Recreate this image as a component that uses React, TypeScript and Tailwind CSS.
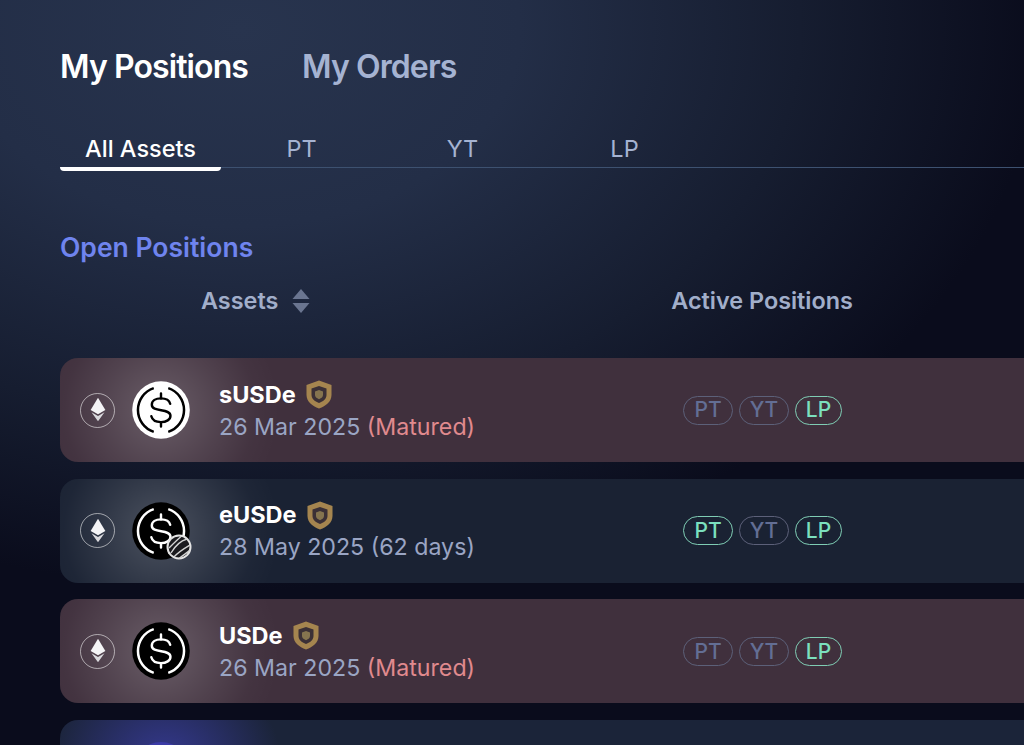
import type { ReactNode } from "react"

const font = { fontFamily: "Inter, sans-serif" }

const EthBadge = () => (
  <div className="flex h-[35px] w-[35px] shrink-0 items-center justify-center rounded-full border-[1.5px] border-white/55">
    <svg viewBox="0 0 20 30" className="h-[26px] w-[18px]">
      <path d="M10 1 L18.5 15 L10 20 L1.5 15 Z" fill="#f4f4f6" />
      <path d="M10 22 L17.5 17.5 L10 28 L2.5 17.5 Z" fill="#d9d9dd" />
    </svg>
  </div>
)

const Coin = ({ light, globe }: { light?: boolean; globe?: boolean }) => {
  const fg = light ? "#000" : "#fff"
  return (
    <div className="relative h-[58px] w-[58px] shrink-0">
      <svg viewBox="0 0 60 60" className="h-full w-full">
        <circle cx="30" cy="30" r="29.8" fill={light ? "#fff" : "#000"} />
        <g fill="none" stroke={fg} strokeWidth="2.6" strokeLinecap="butt">
          <path d="M22.5 7.4 A23.8 23.8 0 0 0 22.5 52.6" />
          <path d="M37.5 7.4 A23.8 23.8 0 0 1 37.5 52.6" />
        </g>
        <g fill="none" stroke={fg} strokeWidth="2.5" strokeLinecap="round">
          <path d="M39.5 23.5 C38.5 19.5 35 18 30 18 C24.5 18 20.5 20.5 20.5 24.5 C20.5 33 39.8 27.5 39.8 36 C39.8 40 35.5 42.5 30 42.5 C25 42.5 21 40.5 20 36.5" />
          <path d="M30 13 V18 M30 42.5 V47" />
        </g>
      </svg>
      {globe && (
        <svg viewBox="0 0 26 26" className="absolute right-[-2px] bottom-0 h-[26px] w-[26px]">
          <circle cx="13" cy="13" r="11.5" fill="#1b1b1f" stroke="#e4e4e4" strokeWidth="2" />
          <g fill="none" stroke="#d4d4d4" strokeWidth="1.4">
            <path d="M5 19 C9 12 14 7 21 5" />
            <path d="M3 14 C8 9 12 5 15 2.5" />
            <path d="M8 23 C12 18 19 14 24 11" />
            <path d="M13 24.5 C17 21 21 19 24 16" />
          </g>
        </svg>
      )}
    </div>
  )
}

const Shield = () => (
  <svg viewBox="0 0 26 29" className="h-[29px] w-[26px] shrink-0">
    <path d="M13 0.5 L25.5 5 V15 C25.5 21.5 20 26 13 28.5 C6 26 0.5 21.5 0.5 15 V5 Z" fill="#a5854f" />
    <path d="M13 6 L20.5 8.6 V15 C20.5 18.6 17.5 21.2 13 23 C8.5 21.2 5.5 18.6 5.5 15 V8.6 Z" fill="#3b3036" />
    <path d="M13 10 L17 11.4 V15 C17 16.8 15.5 18.2 13 19.2 C10.5 18.2 9 16.8 9 15 V11.4 Z" fill="#85744f" />
  </svg>
)

const Pill = ({ label, on }: { label: string; on?: boolean }) => (
  <span
    className={`flex h-[29px] items-center justify-center rounded-full border-[1.5px] text-[21px] font-medium ${
      label === "LP" ? "w-[47px]" : "w-[50px]"
    } ${on ? "border-[#7fcdb4] text-[#7be0bf]" : "border-[#5c6079] text-[#636e94]"}`}
  >
    {label}
  </span>
)

type RowProps = {
  tone: "red" | "blue"
  coin: ReactNode
  name: string
  date: string
  note: string
  matured?: boolean
  pt?: boolean
}

const Row = ({ tone, coin, name, date, note, matured, pt }: RowProps) => (
  <div
    className={`relative flex h-[104px] w-[1100px] shrink-0 items-center overflow-hidden rounded-[18px] ${
      tone === "red" ? "bg-[#40303d]" : "bg-[#1a2233]"
    }`}
  >
    <div className="absolute top-[-68px] left-[-20px] h-[240px] w-[240px] bg-[radial-gradient(closest-side,rgba(255,255,255,0.22),rgba(255,255,255,0.09)_50%,rgba(255,255,255,0.02)_80%,rgba(255,255,255,0))]" />
    <div className="relative flex items-center pl-[20px]">
      <EthBadge />
      <div className="ml-[17px]">{coin}</div>
      <div className="ml-[29px] w-[450px] pt-px">
        <div className="flex items-center gap-[10px]">
          <span className="text-[23.5px] leading-[30px] font-bold text-white">{name}</span>
          <Shield />
        </div>
        <div className="mt-[2px] text-[23.2px] leading-[30px] text-[#9aa5c4]">
          {date} <span className={matured ? "text-[#e08a8e]" : ""}>{note}</span>
        </div>
      </div>
      <div className="ml-[14px] flex gap-[6px]">
        <Pill label="PT" on={pt} />
        <Pill label="YT" />
        <Pill label="LP" on />
      </div>
    </div>
  </div>
)

const App = () => {
  return (
    <div
      style={font}
      className="h-[745px] w-[1024px] overflow-hidden bg-[#0a0c1c] bg-[radial-gradient(ellipse_800px_560px_at_240px_30px,#28344e_0%,#232e47_35%,#161d30_70%,#0a0c1c_100%)] pt-[43px] pl-[60px]"
    >
      <div className="flex gap-[54px] text-[32px] leading-[48px] font-semibold tracking-[-0.9px]">
        <span className="text-white">My Positions</span>
        <span className="text-[#a5b3d2]">My Orders</span>
      </div>

      <div className="mt-[29px] flex h-[48px] border-b border-[#3d5170] text-[23.5px]">
        <div className="-mb-[3px] flex h-[51px] w-[161px] items-center justify-center rounded-b-sm border-b-[4px] border-white pt-[11px] font-medium text-white">
          All Assets
        </div>
        <div className="flex w-[161px] items-center justify-center pt-[10px] text-[#a5b3d2]">PT</div>
        <div className="flex w-[161px] items-center justify-center pt-[10px] text-[#a5b3d2]">YT</div>
        <div className="flex w-[163px] items-center justify-center pt-[10px] text-[#a5b3d2]">LP</div>
      </div>

      <div className="mt-[60px] text-[26.5px] leading-[38px] font-semibold text-[#6f84ee]">Open Positions</div>

      <div className="mt-[20px] flex h-[30px] items-center text-[23.4px] font-semibold text-[#a1aeca]">
        <span className="ml-[141px]">Assets</span>
        <svg viewBox="0 0 18 26" className="ml-[14px] h-[26px] w-[18px]">
          <path d="M9 1 L17.5 11 H0.5 Z" fill="#6a7590" />
          <path d="M9 25 L17.5 15 H0.5 Z" fill="#6a7590" />
        </svg>
        <span className="ml-[361px]">Active Positions</span>
      </div>

      <div className="mt-[42px] flex flex-col gap-[16.7px]">
        <Row tone="red" coin={<Coin light />} name="sUSDe" date="26 Mar 2025" note="(Matured)" matured />
        <Row tone="blue" coin={<Coin globe />} name="eUSDe" date="28 May 2025" note="(62 days)" pt />
        <Row tone="red" coin={<Coin />} name="USDe" date="26 Mar 2025" note="(Matured)" matured />
        <div className="relative h-[104px] w-[1100px] shrink-0 overflow-hidden rounded-[18px] bg-[#1b2439]">
          <div className="absolute top-[-60px] left-[-10px] h-[200px] w-[230px] bg-[radial-gradient(closest-side,rgba(70,70,200,0.6),rgba(70,70,200,0))]" />
          <div className="absolute top-[22px] left-[72px] h-[58px] w-[58px] rounded-full bg-[#3b3ba6]" />
        </div>
      </div>
    </div>
  )
}

export default App
